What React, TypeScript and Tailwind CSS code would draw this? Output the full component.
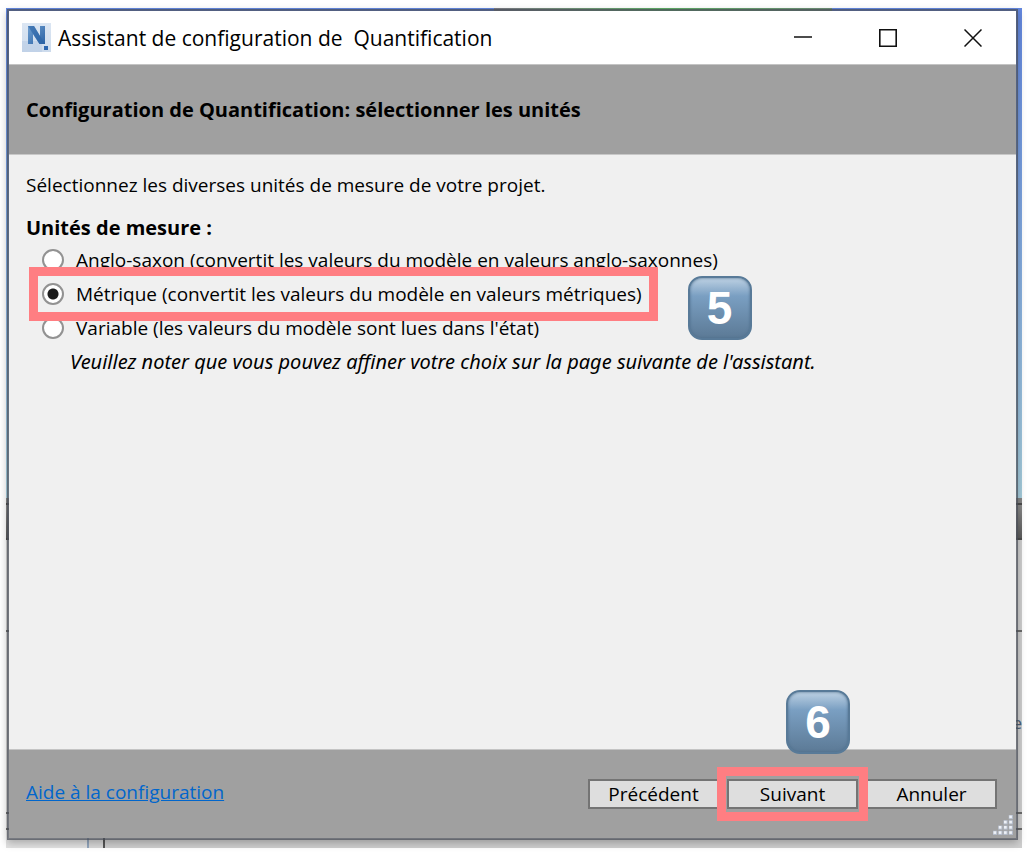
import { useState, type ReactNode } from "react";

const units = [
  { id: "imperial", label: "Anglo-saxon (convertit les valeurs du modèle en valeurs anglo-saxonnes)" },
  { id: "metric", label: "Métrique (convertit les valeurs du modèle en valeurs métriques)" },
  { id: "variable", label: "Variable (les valeurs du modèle sont lues dans l'état)" },
];

function AppIcon() {
  return (
    <svg viewBox="0 0 29 29" className="size-[29px] shrink-0" aria-hidden="true">
      <defs>
        <linearGradient id="tile" x1="0" y1="0" x2="0" y2="1">
          <stop offset="0" stopColor="#dbe6f3" />
          <stop offset="1" stopColor="#cddbec" />
        </linearGradient>
        <linearGradient id="stroke" x1="0" y1="0" x2="1" y2="1">
          <stop offset="0" stopColor="#6f9fd0" />
          <stop offset="1" stopColor="#2a62a5" />
        </linearGradient>
      </defs>
      <rect width="29" height="29" fill="url(#tile)" />
      <path d="M0 18h20v11H0z" fill="#b5cae3" opacity=".5" />
      <path d="M6 3h6l6 10V3h5v18h-5.500L11 11v10H6z" fill="url(#stroke)" />
      <path d="M6 3h6l11 18h-5.500z" fill="#2a62a5" opacity=".6" />
      <path d="M22 23h4v4h-4z" fill="#2b66b0" />
    </svg>
  );
}

function Backdrop() {
  return (
    <div className="absolute inset-0 flex flex-col overflow-hidden bg-[#cfcfcf]" aria-hidden="true">
      <div className="h-[490px] shrink-0 bg-linear-to-b from-[#6488e0] to-[#a6cddc]">
        <div className="ml-[48%] h-[3px] w-1/3 bg-linear-to-r from-[#7c7c86] via-[#5fae68] to-[#6f8f78]" />
      </div>
      <div className="h-[7px] shrink-0 border-b-2 border-[#4c4c4c] bg-[#858585]" />
      <div className="h-[35px] shrink-0 border-b-2 border-[#4c4c4c] bg-linear-to-b from-[#8a8a8a] to-[#5c5c5c]" />
      <div className="h-[92px] shrink-0 border-b-2 border-[#6c6c6c]" />
      <div className="flex flex-1 items-start justify-end border-b-2 border-[#6c6c6c] pt-[78px] text-[17px] text-[#4a6078]">
        e
      </div>
      <div className="h-4 shrink-0 border-b-2 border-[#6c6c6c]" />
      <div className="flex h-[18px] shrink-0">
        <div className="w-[83px] border-r-2 border-[#93a6bd] bg-[#e2e2e2]" />
        <div className="w-4 border-r-2 border-[#555] bg-[#d8d8d8]" />
      </div>
    </div>
  );
}

function Keycap({ children, className }: { children: ReactNode; className: string }) {
  return (
    <span
      className={`absolute z-20 flex size-16 items-center justify-center rounded-[14px] border-2 border-[#587a98] bg-linear-to-b from-[#bdd1e3] via-[#7a9fc2] via-30% to-[#5c7a96] font-['Liberation_Sans',sans-serif] text-[46px] leading-none font-bold text-white shadow-[inset_0_0_3px_#4d6d8a] ${className}`}
    >
      {children}
    </span>
  );
}

function ResizeGrip() {
  const dots = [
    [15, 0],
    [10, 5], [15, 5],
    [5, 10], [10, 10], [15, 10],
    [0, 15], [5, 15], [10, 15], [15, 15],
  ];
  return (
    <svg viewBox="0 0 20 20" className="absolute right-[2px] bottom-[2px] size-[21px]" aria-hidden="true">
      {dots.map(([x, y]) => (
        <g key={`${x}-${y}`}>
          <rect x={x} y={y} width="4" height="4" fill="#b4bccb" />
          <rect x={x + 0.5} y={y + 0.5} width="2.5" height="2.5" fill="#eef1f6" />
        </g>
      ))}
    </svg>
  );
}

function WizardButton({ children }: { children: ReactNode }) {
  return (
    <button type="button" className="h-[30px] w-[131px] border-2 border-[#747474] bg-[#dedede] text-center">
      {children}
    </button>
  );
}

export default function App() {
  const [unit, setUnit] = useState("metric");

  return (
    <div className="flex min-h-screen bg-white pt-2 pr-[5px] pb-1.5 pl-1.5 text-black">
      <div className="relative flex flex-1 pt-px pr-1 pb-2 pl-px">
        <Backdrop />
        <main className="relative flex flex-1 flex-col border-2 border-[#4a4f58]/70 bg-[#f0f0f0] bg-clip-padding font-['Open_Sans',sans-serif] text-[19px] leading-6 shadow-[0_3px_8px_rgba(0,0,0,0.25)]">
          <header className="flex h-[54px] items-center border-b border-[#c4c4c4] bg-white pl-[13px]">
            <AppIcon />
            <h1 className="ml-[7px] flex-1 text-[21px] whitespace-pre">
              Assistant de configuration de{"  "}Quantification
            </h1>
            <div className="flex h-full">
              <button type="button" aria-label="Réduire" className="flex w-[85px] items-center justify-center">
                <svg viewBox="0 0 18 18" className="size-[18px]" fill="none" stroke="#111" strokeWidth="1.5">
                  <path d="M0 8h18" />
                </svg>
              </button>
              <button type="button" aria-label="Agrandir" className="flex w-[85px] items-center justify-center">
                <svg viewBox="0 0 18 18" className="size-[18px]" fill="none" stroke="#111" strokeWidth="1.6">
                  <path d="M.8.8h16.4v16.4H.8z" />
                </svg>
              </button>
              <button type="button" aria-label="Fermer" className="flex w-[86px] items-center justify-center">
                <svg viewBox="0 0 18 18" className="size-[18px]" fill="none" stroke="#111" strokeWidth="1.5">
                  <path d="M.5.5l17 17M17.5.5l-17 17" />
                </svg>
              </button>
            </div>
          </header>

          <div className="flex h-[90px] items-center border-b border-[#c8c8c8] bg-[#a0a0a0] px-[17px]">
            <h2 className="text-[20px] font-bold">Configuration de Quantification: sélectionner les unités</h2>
          </div>

          <section className="flex-1 px-[17px] pt-[18px]">
            <p>Sélectionnez les diverses unités de mesure de votre projet.</p>
            <fieldset className="mt-[19px]">
              <legend className="text-[20px] font-bold">Unités de mesure :</legend>
              <div className="flex flex-col items-start pt-[3px] pl-4">
                {units.map(({ id, label }) => (
                  <div key={id} className="relative flex h-[34px] items-center">
                    <input
                      id={id}
                      type="radio"
                      name="units"
                      checked={unit === id}
                      onChange={() => setUnit(id)}
                      className="size-[22px] shrink-0 appearance-none rounded-full border-2 border-[#929292] bg-white bg-clip-padding checked:bg-[radial-gradient(circle,#1c1c1c_5px,#fff_6px)]"
                    />
                    <label htmlFor={id} className="ml-3 whitespace-nowrap">
                      {label}
                    </label>
                    {id === "metric" && (
                      <>
                        <span className="pointer-events-none absolute -inset-y-[10px] -right-4 -left-[13px] z-10 border-[9px] border-[#ff7e82]" />
                        <Keycap className="-top-px left-full ml-[46px]">5</Keycap>
                      </>
                    )}
                  </div>
                ))}
              </div>
              <p className="mt-[5px] pl-11 font-['Noto_Sans',sans-serif] text-[20px] italic">
                Veuillez noter que vous pouvez affiner votre choix sur la page suivante de l'assistant.
              </p>
            </fieldset>
          </section>

          <footer className="relative flex h-[89px] items-center justify-between border-t border-[#c4c4c4] bg-[#a0a0a0] pr-[19px] pl-[17px]">
            <a href="#aide" className="pb-1 text-[#0066cc] underline">
              Aide à la configuration
            </a>
            <div className="flex gap-2">
              <WizardButton>Précédent</WizardButton>
              <div className="relative">
                <WizardButton>Suivant</WizardButton>
                <span className="pointer-events-none absolute -inset-x-[10px] -inset-y-3 z-10 border-[9px] border-[#ff7e82]" />
                <Keycap className="bottom-full left-[59px] mb-[25px]">6</Keycap>
              </div>
              <WizardButton>Annuler</WizardButton>
            </div>
            <ResizeGrip />
          </footer>
        </main>
      </div>
    </div>
  );
}
